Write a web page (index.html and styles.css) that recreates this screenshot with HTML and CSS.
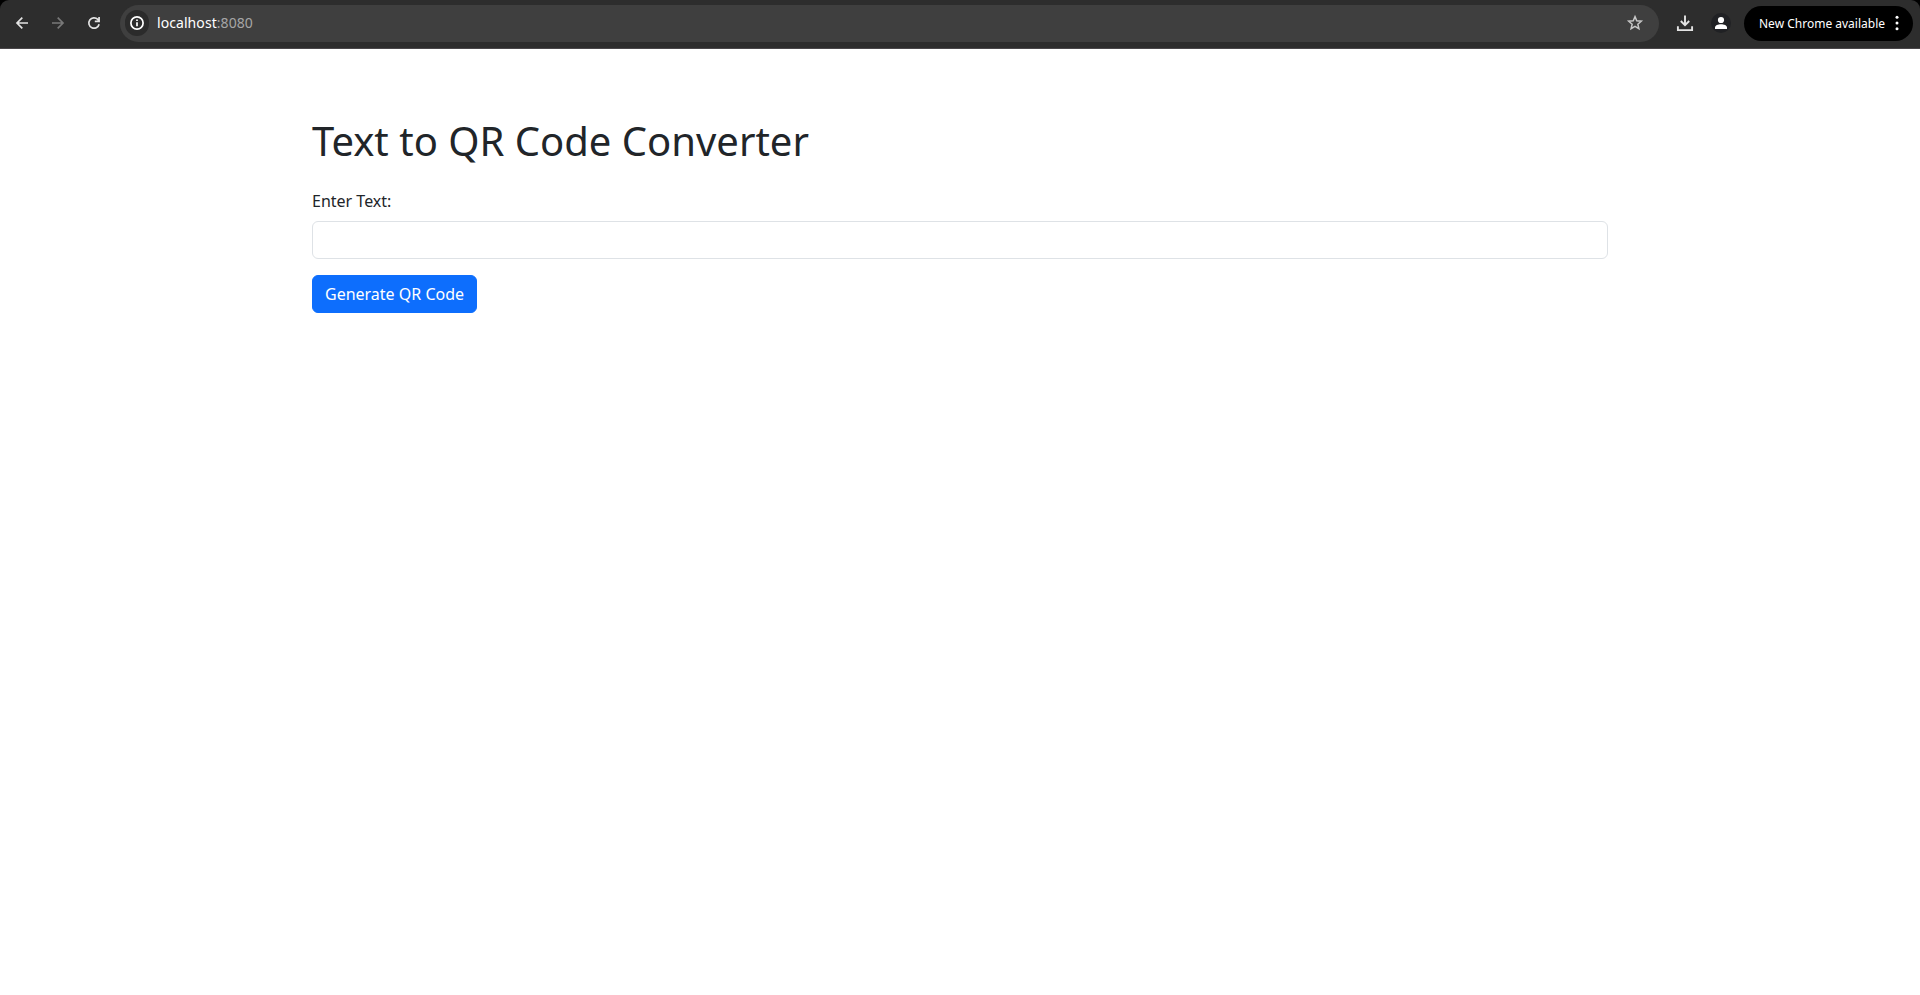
FILE: index.html
```html
<!DOCTYPE html>
<html lang="en">
<head>
<meta charset="utf-8">
<title>Text to QR Code Converter</title>
<link rel="stylesheet" href="styles.css">
</head>
<body>
<div class="frame">
<header class="toolbar">
  <nav class="nav">
    <svg class="icon" viewBox="0 0 20 20"><path d="M16 10H5M10.3 4.7 5 10l5.3 5.3"/></svg>
    <svg class="icon dim" viewBox="0 0 20 20"><path d="M4 10h11M9.7 4.7 15 10l-5.3 5.3"/></svg>
    <svg class="icon" viewBox="0 0 20 20"><path d="M15.1 11.2A5.2 5.2 0 1 1 13.8 6.4L15 7.6M15.1 4v4.3h-4.3"/></svg>
  </nav>
  <div class="omnibox">
    <span class="site"><svg viewBox="0 0 16 16"><circle cx="8" cy="8" r="6.1"/><path d="M8 7.2v4M8 4.5v1.6"/></svg></span>
    <span class="url">localhost<span class="port">:8080</span></span>
    <svg class="star" viewBox="0 0 20 20"><path d="M10 3.6l1.75 4.2 4.55.4-3.45 3 1.05 4.45L10 13.3l-3.9 2.35 1.05-4.45-3.45-3 4.55-.4z"/></svg>
  </div>
  <svg class="download" viewBox="0 0 20 20"><path d="M10 2.5v9.2M5.8 8l4.2 4.2L14.2 8M2.9 13.3v3.8h14.2v-3.8"/></svg>
  <span class="avatar"><svg viewBox="0 0 20 20"><circle cx="10" cy="7" r="3.1"/><path d="M4 16v-1.5C4 12.4 7 11.2 10 11.2s6 1.2 6 3.3V16z"/></svg></span>
  <button class="update">New Chrome available
    <svg viewBox="0 0 4 16"><circle cx="2" cy="2.2" r="1.5"/><circle cx="2" cy="8" r="1.5"/><circle cx="2" cy="13.8" r="1.5"/></svg>
  </button>
</header>
</div>
<main class="container">
  <h1>Text to QR Code Converter</h1>
  <form>
    <label for="text">Enter Text:</label>
    <input id="text" type="text">
    <button class="generate" type="button">Generate QR Code</button>
  </form>
</main>
</body>
</html>
```
FILE: styles.css
```css
* { box-sizing: border-box; }
body {
  margin: 0;
  background: #fff;
  color: #212529;
  font: 16px/1.5 "Noto Sans", sans-serif;
}
.frame { background: #000; }
.toolbar {
  display: flex;
  align-items: center;
  height: 49px;
  padding: 0 7px 2px 12px;
  border-bottom: 1px solid #4a474a;
  border-radius: 9px 9px 0 0;
  background: #2d2d2d;
}
.nav { display: flex; gap: 16px; width: 108px; }
.icon, .star, .download {
  width: 20px;
  height: 20px;
  fill: none;
  stroke: #e3e3e3;
  stroke-width: 1.7;
}
.dim { stroke: #787878; }
.omnibox {
  display: flex;
  align-items: center;
  flex: 1;
  height: 37px;
  margin-top: 1px;
  padding: 0 14px 1px 5px;
  border-radius: 19px;
  background: #3f3f3f;
}
.site {
  display: flex;
  align-items: center;
  justify-content: center;
  width: 24px;
  height: 26px;
  border-radius: 13px;
  background: #2b2b2b;
}
.site svg { width: 16px; height: 16px; fill: none; stroke: #fff; stroke-width: 1.7; }
.url { flex: 1; margin-left: 8px; font-size: 14px; line-height: 20px; letter-spacing: 0.07px; color: #fff; }
.port { color: #a6a6a6; }
.star { stroke: #c7c7c7; stroke-width: 1.5; }
.download { margin: 0 16px; stroke-width: 1.9; }
.avatar { display: flex; width: 20px; height: 20px; margin-right: 13px; border-radius: 50%; background: #202124; }
.avatar svg { fill: #fff; }
.update {
  display: flex;
  align-items: center;
  justify-content: space-between;
  width: 169px;
  height: 35px;
  margin: 1px 0 0;
  padding: 1px 14px 0 15px;
  border: 0;
  border-radius: 18px;
  background: #000;
  color: #fff;
  font: 12px/18px "Noto Sans", sans-serif;
  white-space: nowrap;
}
.update svg { width: 4px; height: 16px; margin-bottom: 2px; fill: #fff; }
.container { width: 1320px; margin: 0 auto; padding: 68px 12px 0; }
h1 { margin: 0 0 24px; font-size: 40px; font-weight: 400; line-height: 48px; }
label { display: block; margin-bottom: 8px; }
input {
  display: block;
  width: 100%;
  height: 38px;
  margin-bottom: 16px;
  padding: 6px 12px;
  border: 1px solid #dee2e6;
  border-radius: 6px;
  background: #fff;
  font: inherit;
}
.generate {
  display: block;
  height: 38px;
  padding: 6px 12px;
  border: 1px solid #0d6efd;
  border-radius: 6px;
  background: #0d6efd;
  color: #fff;
  font: inherit;
}
```
